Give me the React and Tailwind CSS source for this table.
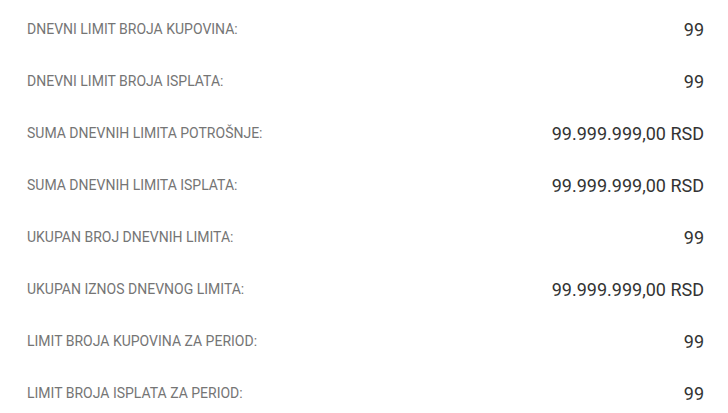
const rows = [
  ["DNEVNI LIMIT BROJA KUPOVINA:", "99"],
  ["DNEVNI LIMIT BROJA ISPLATA:", "99"],
  ["SUMA DNEVNIH LIMITA POTROŠNJE:", "99.999.999,00 RSD"],
  ["SUMA DNEVNIH LIMITA ISPLATA:", "99.999.999,00 RSD"],
  ["UKUPAN BROJ DNEVNIH LIMITA:", "99"],
  ["UKUPAN IZNOS DNEVNOG LIMITA:", "99.999.999,00 RSD"],
  ["LIMIT BROJA KUPOVINA ZA PERIOD:", "99"],
  ["LIMIT BROJA ISPLATA ZA PERIOD:", "99"],
];

export default function App() {
  return (
    <div className="bg-white w-[728px] h-[413px] overflow-hidden font-['Roboto',sans-serif] pt-[3px]">
      {rows.map(([label, value], i) => (
        <div key={i} className="flex items-center justify-between h-[52px] pl-[27px] pr-[24px]">
          <span className="text-[14px] text-[#757575]">{label}</span>
          <span className="text-[18px] text-[#333]">{value}</span>
        </div>
      ))}
    </div>
  );
}
